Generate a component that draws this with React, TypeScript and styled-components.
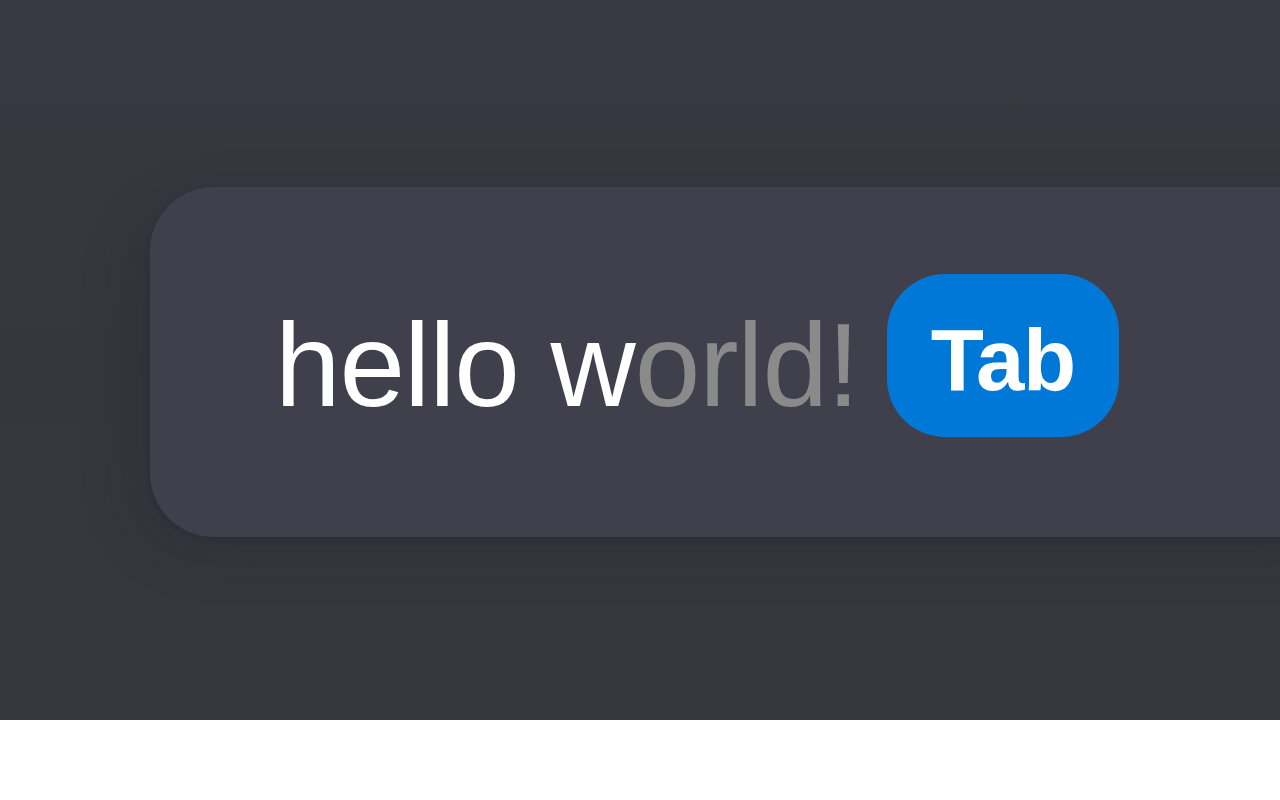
import styled, { createGlobalStyle } from 'styled-components';

const GlobalStyle = createGlobalStyle`
  html, body {
    margin: 0;
    padding: 0;
    background: #ffffff;
  }
`;

export default function App() {
  return (
    <>
      <GlobalStyle />
      <Stage>
        <Card>
          <Prompt>
            <Typed>hello w</Typed>
            <Suggestion>orld!</Suggestion>
          </Prompt>
          <KeyHint>Tab</KeyHint>
        </Card>
      </Stage>
    </>
  );
}

const Stage = styled.div`
  height: 720px;
  display: flex;
  align-items: center;
  padding-left: 150px;
  box-sizing: border-box;
  overflow: hidden;
  background: linear-gradient(180deg, #383842 0%, #36363f 50%, #373740 100%);
`;

const Card = styled.div`
  flex: none;
  width: 1200px;
  height: 350px;
  margin-top: 4px;
  box-sizing: border-box;
  padding-left: 125px;
  display: flex;
  align-items: center;
  gap: 28px;
  background: #3f404c;
  border-radius: 64px 0 0 64px;
  box-shadow: -16px 16px 60px rgba(0, 0, 0, 0.12), 0 2px 6px rgba(0, 0, 0, 0.1);
`;

const Prompt = styled.div`
  font-family: 'Liberation Sans', Arial, sans-serif;
  font-size: 118px;
  line-height: 1;
  letter-spacing: -1.1px;
  white-space: nowrap;
  margin-top: 6px;
`;

const Typed = styled.span`
  color: #ffffff;
`;

const Suggestion = styled.span`
  color: #8a8a8a;
`;

const KeyHint = styled.div`
  flex: none;
  width: 232px;
  height: 163px;
  box-sizing: border-box;
  padding-top: 8px;
  margin-bottom: 13px;
  display: flex;
  align-items: center;
  justify-content: center;
  background: #0078d7;
  border-radius: 58px;
  color: #ffffff;
  font-family: 'Liberation Sans', Arial, sans-serif;
  font-weight: 700;
  font-size: 87px;
  line-height: 1;
  letter-spacing: -1.5px;
`;
